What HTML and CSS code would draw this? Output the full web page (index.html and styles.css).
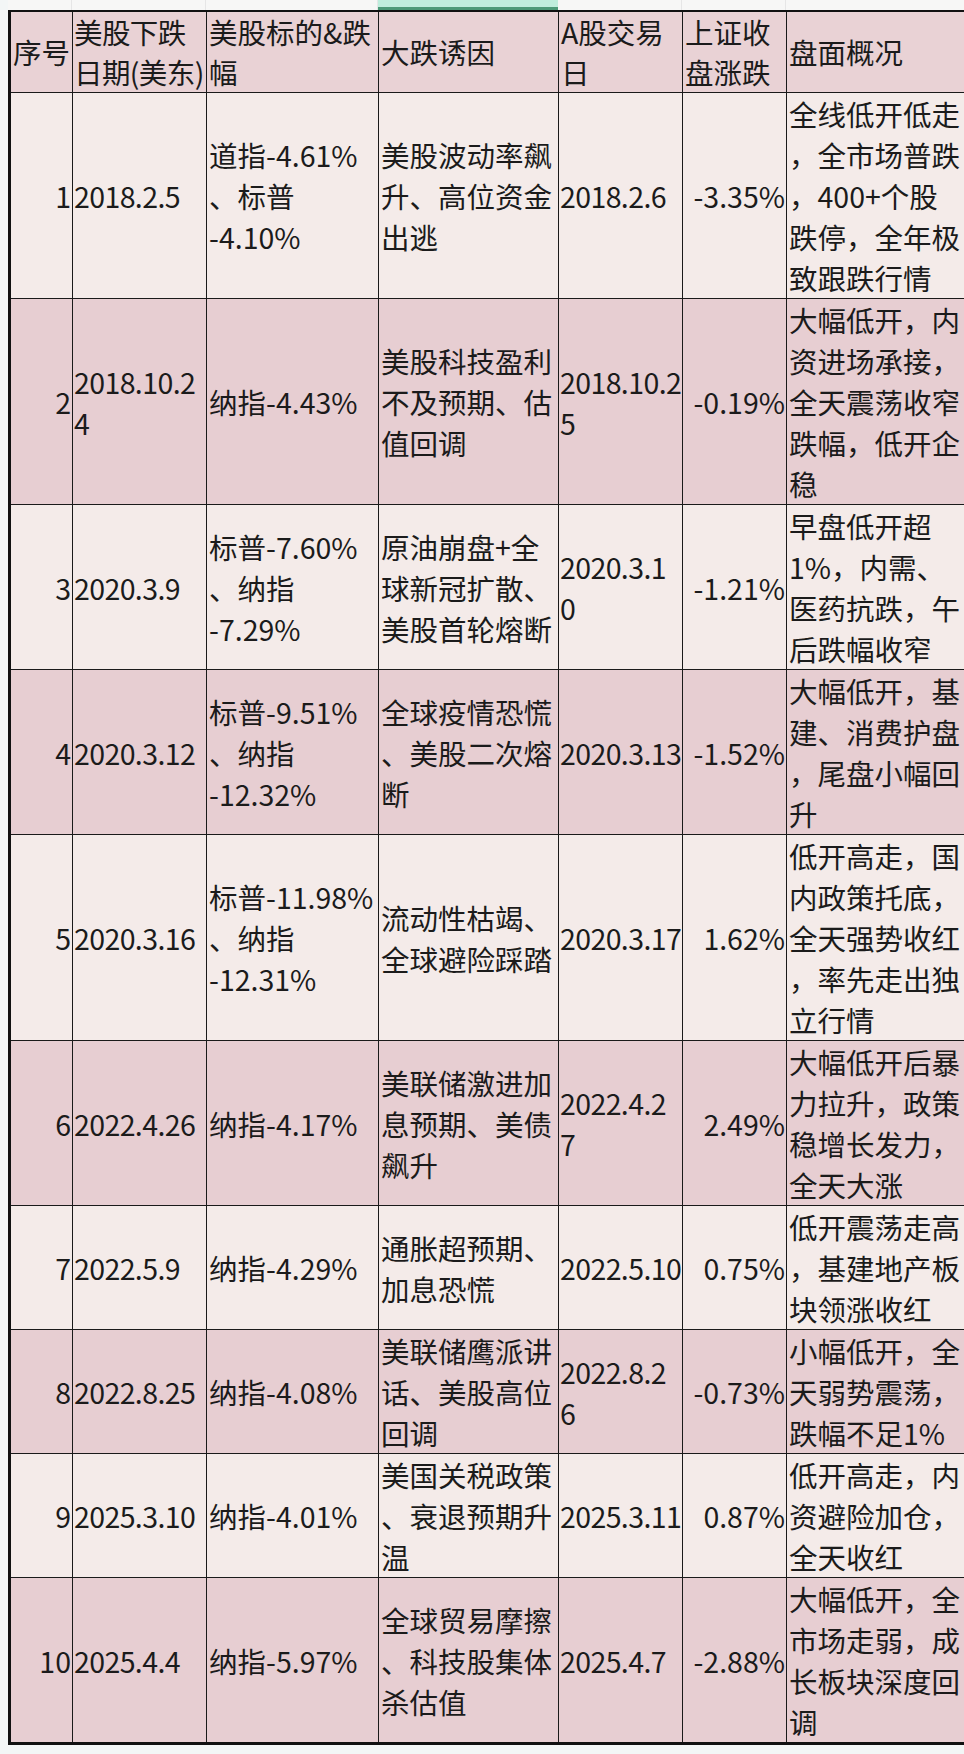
FILE: index.html
```html
<!DOCTYPE html>
<html lang="zh-CN">
<head>
<meta charset="utf-8">
<title>美股大跌与A股表现</title>
<link rel="stylesheet" href="styles.css">
</head>
<body>
<div class="sheet">
  <div class="topstrip">
    <div class="ts c1"></div>
    <div class="ts c2"></div>
    <div class="ts c3"></div>
    <div class="ts c4 active"></div>
    <div class="ts c5"></div>
    <div class="ts c6"></div>
    <div class="ts c7"></div>
  </div>
  <table class="grid">
    <colgroup>
      <col class="w1"><col class="w2"><col class="w3"><col class="w4"><col class="w5"><col class="w6"><col class="w7">
    </colgroup>
    <thead>
      <tr class="head">
        <th>序号</th>
        <th class="tight">美股下跌<br>日期(美东)</th>
        <th>美股标的&amp;跌<br>幅</th>
        <th>大跌诱因</th>
        <th>A股交易<br>日</th>
        <th>上证收<br>盘涨跌</th>
        <th>盘面概况</th>
      </tr>
    </thead>
    <tbody>
      <tr class="odd">
        <td class="num">1</td>
        <td class="date">2018.2.5</td>
        <td>道指-4.61%<br>、标普<br>-4.10%</td>
        <td>美股波动率飙<br>升、高位资金<br>出逃</td>
        <td class="date">2018.2.6</td>
        <td class="num">-3.35%</td>
        <td>全线低开低走<br>，全市场普跌<br>，400+个股<br>跌停，全年极<br>致跟跌行情</td>
      </tr>
      <tr class="even">
        <td class="num">2</td>
        <td class="date">2018.10.2<br>4</td>
        <td>纳指-4.43%</td>
        <td>美股科技盈利<br>不及预期、估<br>值回调</td>
        <td class="date">2018.10.2<br>5</td>
        <td class="num">-0.19%</td>
        <td>大幅低开，内<br>资进场承接，<br>全天震荡收窄<br>跌幅，低开企<br>稳</td>
      </tr>
      <tr class="odd">
        <td class="num">3</td>
        <td class="date">2020.3.9</td>
        <td>标普-7.60%<br>、纳指<br>-7.29%</td>
        <td>原油崩盘+全<br>球新冠扩散、<br>美股首轮熔断</td>
        <td class="date">2020.3.1<br>0</td>
        <td class="num">-1.21%</td>
        <td>早盘低开超<br>1%，内需、<br>医药抗跌，午<br>后跌幅收窄</td>
      </tr>
      <tr class="even">
        <td class="num">4</td>
        <td class="date">2020.3.12</td>
        <td>标普-9.51%<br>、纳指<br>-12.32%</td>
        <td>全球疫情恐慌<br>、美股二次熔<br>断</td>
        <td class="date">2020.3.13</td>
        <td class="num">-1.52%</td>
        <td>大幅低开，基<br>建、消费护盘<br>，尾盘小幅回<br>升</td>
      </tr>
      <tr class="odd">
        <td class="num">5</td>
        <td class="date">2020.3.16</td>
        <td>标普-11.98%<br>、纳指<br>-12.31%</td>
        <td>流动性枯竭、<br>全球避险踩踏</td>
        <td class="date">2020.3.17</td>
        <td class="num">1.62%</td>
        <td>低开高走，国<br>内政策托底，<br>全天强势收红<br>，率先走出独<br>立行情</td>
      </tr>
      <tr class="even">
        <td class="num">6</td>
        <td class="date">2022.4.26</td>
        <td>纳指-4.17%</td>
        <td>美联储激进加<br>息预期、美债<br>飙升</td>
        <td class="date">2022.4.2<br>7</td>
        <td class="num">2.49%</td>
        <td>大幅低开后暴<br>力拉升，政策<br>稳增长发力，<br>全天大涨</td>
      </tr>
      <tr class="odd">
        <td class="num">7</td>
        <td class="date">2022.5.9</td>
        <td>纳指-4.29%</td>
        <td>通胀超预期、<br>加息恐慌</td>
        <td class="date">2022.5.10</td>
        <td class="num">0.75%</td>
        <td>低开震荡走高<br>，基建地产板<br>块领涨收红</td>
      </tr>
      <tr class="even">
        <td class="num">8</td>
        <td class="date">2022.8.25</td>
        <td>纳指-4.08%</td>
        <td>美联储鹰派讲<br>话、美股高位<br>回调</td>
        <td class="date">2022.8.2<br>6</td>
        <td class="num">-0.73%</td>
        <td>小幅低开，全<br>天弱势震荡，<br>跌幅不足1%</td>
      </tr>
      <tr class="odd">
        <td class="num">9</td>
        <td class="date">2025.3.10</td>
        <td>纳指-4.01%</td>
        <td>美国关税政策<br>、衰退预期升<br>温</td>
        <td class="date">2025.3.11</td>
        <td class="num">0.87%</td>
        <td>低开高走，内<br>资避险加仓，<br>全天收红</td>
      </tr>
      <tr class="even last">
        <td class="num">10</td>
        <td class="date">2025.4.4</td>
        <td>纳指-5.97%</td>
        <td>全球贸易摩擦<br>、科技股集体<br>杀估值</td>
        <td class="date">2025.4.7</td>
        <td class="num">-2.88%</td>
        <td>大幅低开，全<br>市场走弱，成<br>长板块深度回<br>调</td>
      </tr>
    </tbody>
  </table>
</div>
</body>
</html>
```
FILE: styles.css
```css
html, body {
  margin: 0;
  padding: 0;
}
body {
  width: 964px;
  height: 1754px;
  overflow: hidden;
  background: #f3f6f6;
  font-family: "Noto Sans CJK SC", "Noto Sans", sans-serif;
  color: #1b1b1b;
}
.sheet {
  padding-left: 8px;
  width: 964px;
  box-sizing: border-box;
  overflow: hidden;
}
.topstrip {
  display: flex;
  height: 10px;
  background: #f7f7f6;
}
.ts {
  flex: none;
  height: 10px;
  border-right: 1px solid #e6e6e6;
  box-sizing: border-box;
}
.ts.c1 { width: 64px; }
.ts.c2 { width: 134px; }
.ts.c3 { width: 172px; }
.ts.c4 { width: 180px; }
.ts.c5 { width: 124px; }
.ts.c6 { width: 104px; }
.ts.c7 { width: 178px; border-right: none; }
.ts.active {
  background: #bfeedd;
  border-bottom: 3px solid #4c9a78;
  border-right: none;
}
.grid {
  border-collapse: collapse;
  table-layout: fixed;
  width: 968px;
  border-top: 2px solid #111;
  border-left: 3px solid #111;
  border-bottom: 3px solid #111;
  font-size: 28.5px;
  line-height: 41px;
}
.w1 { width: 63px; }
.w2 { width: 134px; }
.w3 { width: 172px; }
.w4 { width: 180px; }
.w5 { width: 124px; }
.w6 { width: 104px; }
.w7 { width: 191px; }
.grid th,
.grid td {
  border: 1px solid #1a1a1a;
  padding: 0 2px;
  vertical-align: middle;
  text-align: left;
  white-space: nowrap;
  overflow: hidden;
  font-weight: 400;
}
.grid th {
  height: 79px;
  line-height: 40px;
  background: #e9d2d5;
}
.grid th.tight {
  padding: 0 0 0 1px;
  letter-spacing: -0.6px;
}
.grid td.date {
  padding: 0 0 0 1px;
  letter-spacing: -0.6px;
}
.grid td.num {
  text-align: right;
  padding-right: 1px;
}
.grid th:last-child,
.grid td:last-child {
  border-right: none;
}
.odd td {
  background: #f4ebe9;
}
.even td {
  background: #e7ced2;
}
.last td {
  height: 163px;
}
```
